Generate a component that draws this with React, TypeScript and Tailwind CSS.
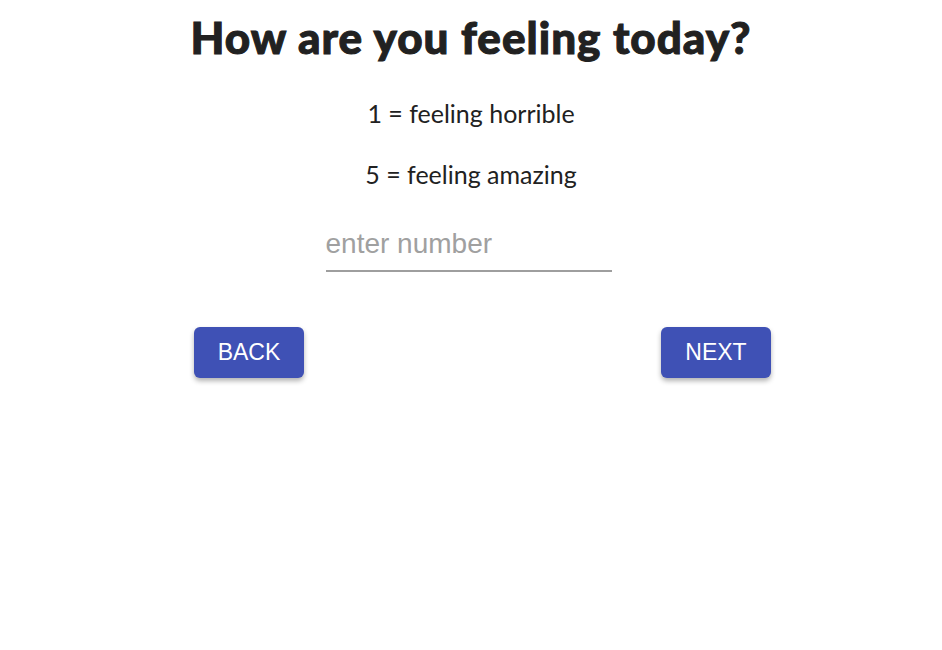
import { useState } from 'react';

function App() {
  const [value, setValue] = useState('');

  const btn =
    'h-[51px] w-[110px] rounded-md bg-[#3f51b5] text-white text-[23px] shadow-[0_3px_5px_rgba(0,0,0,0.3)] font-["Liberation_Sans",Arial,sans-serif] flex items-center justify-center';

  return (
    <div className="w-[942px] h-[650px] bg-white text-[#212121]">
      <div className="flex flex-col items-center font-['Lato','Gill_Sans',sans-serif]">
        <h1 className="mt-[12px] h-[50px] text-[44px] leading-[50px] font-black tracking-[1px] [-webkit-text-stroke:1px_#212121]">How are you feeling today?</h1>
        <p className="mt-[36px] text-[25px] leading-[30px]">1 = feeling horrible</p>
        <p className="mt-[31px] text-[25px] leading-[30px]">5 = feeling amazing</p>
        <input
          value={value}
          onChange={(event) => setValue(event.target.value)}
          placeholder="enter number"
          className="mt-[35px] mr-[5px] w-[286px] h-[48px] border-b-2 border-[#9e9e9e] pb-[6px] outline-none text-[28px] font-['Liberation_Sans',Arial,sans-serif] placeholder:text-[#a0a0a0]"
        />
      </div>
      <div className="mt-[55px] flex justify-between pl-[194px] pr-[171px]">
        <button className={btn}>BACK</button>
        <button className={btn}>NEXT</button>
      </div>
    </div>
  );
}

export default App;
